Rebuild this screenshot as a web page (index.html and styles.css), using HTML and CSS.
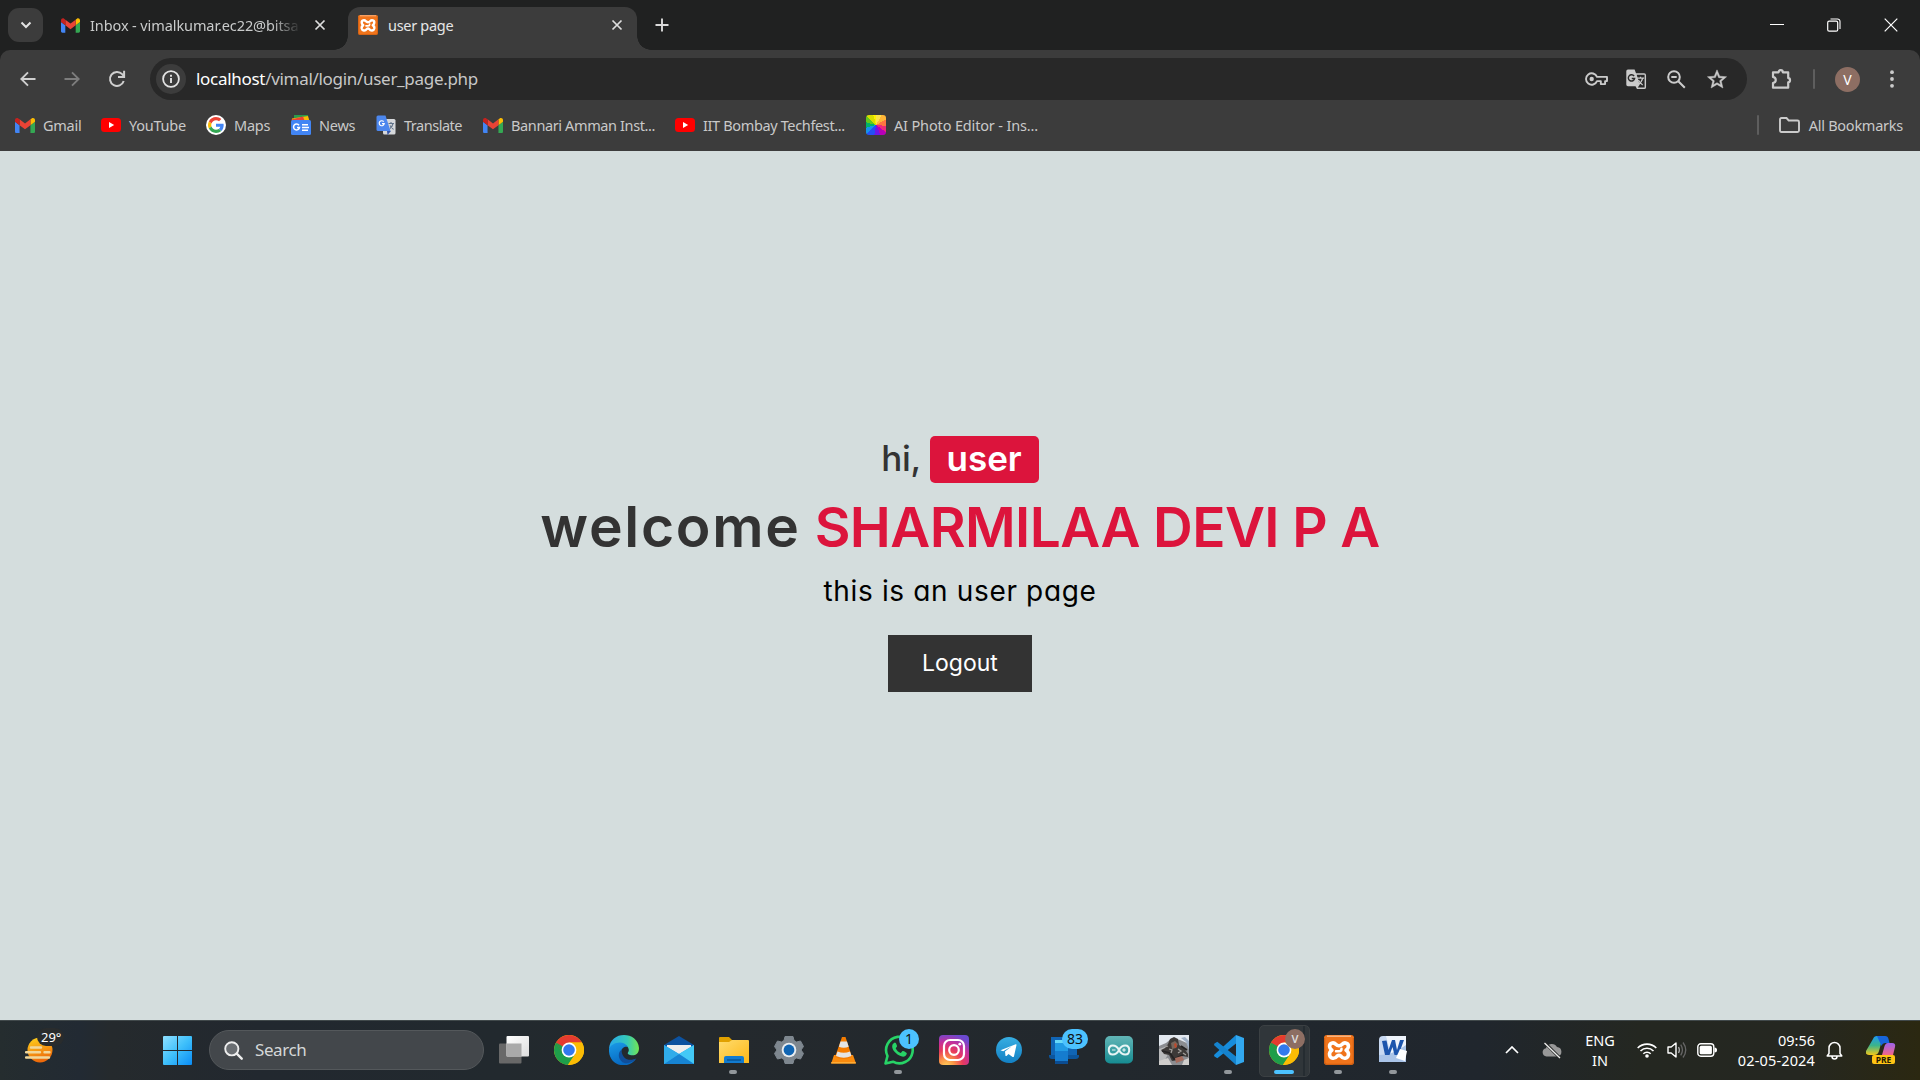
FILE: index.html
```html
<!DOCTYPE html>
<html lang="en">
<head>
<meta charset="utf-8">
<title>user page</title>
<link rel="stylesheet" href="styles.css">
</head>
<body>
<svg class="defs" aria-hidden="true">
  <symbol id="gmail" viewBox="52 42 88 66"><path fill="#4285f4" d="M58 108h14V74L52 59v43c0 3.320 2.690 6 6 6"/><path fill="#34a853" d="M120 108h14c3.320 0 6-2.690 6-6V59l-20 15"/><path fill="#fbbc04" d="M120 48v26l20-15v-8c0-7.420-8.470-11.650-14.400-7.200"/><path fill="#ea4335" d="M72 74V48l24 18 24-18v26L96 92"/><path fill="#c5221f" d="M52 51v8l20 15V48l-5.600-4.200c-5.940-4.450-14.400-.220-14.400 7.200"/></symbol>
  <symbol id="youtube" viewBox="0 0 20 14"><rect width="20" height="14" rx="3.500" fill="#f00"/><path d="M8 4v6l5.200-3z" fill="#fff"/></symbol>
  <symbol id="xampp" viewBox="0 0 30 30"><rect width="30" height="30" rx="3" fill="#f0741b"/><path d="M3 1.200h24" stroke="#f9b98a" stroke-width="1.400"/><path d="M.7 3v24q0 2.300 2.300 2.300h24q2.300 0 2.300-2.300V3" fill="none" stroke="#c85a12" stroke-width="1"/><path d="M11.800 9.300C9.500 6.800 5.200 8 5.600 11.700c.2 1.800 1.400 2.800 2.300 3.500-1.600 1-2.700 2.800-2.300 5 .8 3.700 5.200 4.100 7.400 1 1.200-1 2.800-1 4 0 2.200 3.100 6.600 2.700 7.400-1 .4-2.200-.7-4-2.300-5 .9-.7 2.100-1.700 2.300-3.500.4-3.700-3.900-4.900-6.200-2.400-1.900 2-4.500 2-6.400 0z" fill="none" stroke="#fff" stroke-width="3.600" stroke-linejoin="round"/><path d="M12 16.300h3.200q2.300 0 2.300-2.500" fill="none" stroke="#fff" stroke-width="2.500" stroke-linecap="round"/></symbol>
  <symbol id="chrome" viewBox="0 0 30 30"><circle cx="15" cy="15" r="15" fill="#fbbc05"/><path d="M15 15 2.010 7.500A15 15 0 0 0 13.700 29.950L21.500 18.500z" fill="#1e9e4a"/><path d="M2.010 7.500A15 15 0 0 1 27.990 7.500H15L8.500 18.500z" fill="#e53b2f"/><path d="M1.980 7.550 8.500 18.700 13 21.500 15 15z" fill="#1e9e4a"/><path d="M15 7.500h12.990A15 15 0 0 1 14.200 29.980L21.500 18.700z" fill="#fbbc05"/><circle cx="15" cy="15" r="7.400" fill="#fff"/><circle cx="15" cy="15" r="5.800" fill="#3279ee"/></symbol>
  <symbol id="close" viewBox="0 0 12 12"><path d="M1.500 1.500l9 9m0-9l-9 9" fill="none" stroke="#dedede" stroke-width="1.700"/></symbol>
</svg>

<header class="browser">
  <div class="tabs">
    <button class="tab-search"><svg width="12" height="8" viewBox="0 0 12 8"><path d="M1.500 1.500 6 6l4.500-4.500" fill="none" stroke="#e3e3e3" stroke-width="2"/></svg></button>
    <div class="tab tab-inbox">
      <svg width="19" height="15"><use href="#gmail"/></svg>
      <span class="tab-title fade">Inbox - vimalkumar.ec22@bitsa</span>
      <svg class="x" width="12" height="12"><use href="#close"/></svg>
    </div>
    <div class="tab tab-active">
      <svg width="20" height="20"><use href="#xampp"/></svg>
      <span class="tab-title">user page</span>
      <svg class="x" width="12" height="12"><use href="#close"/></svg>
    </div>
    <svg class="new-tab" width="14" height="14" viewBox="0 0 14 14"><path d="M7 .5v13M.5 7h13" stroke="#dadada" stroke-width="1.900"/></svg>
    <div class="window-controls">
      <svg width="14" height="14" viewBox="0 0 14 14"><path d="M0 6.500h14" stroke="#fff"/></svg>
      <svg width="14" height="14" viewBox="0 0 14 14"><rect x=".7" y="3.200" width="10" height="10" rx="1.500" fill="none" stroke="#fff" stroke-width="1.200"/><path d="M3.500 1h7a2.500 2.500 0 0 1 2.500 2.500V11" fill="none" stroke="#fff" stroke-width="1.100"/></svg>
      <svg width="14" height="14" viewBox="0 0 14 14"><path d="M.7.7l12.600 12.600M13.300.7.700 13.300" stroke="#fff" stroke-width="1.200"/></svg>
    </div>
  </div>

  <div class="toolbar">
    <div class="nav">
      <svg width="16" height="16" viewBox="0 0 16 16"><path d="M15.500 8H2M8 1.300 1.300 8 8 14.700" fill="none" stroke="#cfcfcf" stroke-width="1.900"/></svg>
      <svg width="16" height="16" viewBox="0 0 16 16"><path d="M.5 8H14M8 1.300 14.700 8 8 14.700" fill="none" stroke="#7d7d7d" stroke-width="1.900"/></svg>
      <svg width="18" height="18" viewBox="0 0 18 18"><path d="M15.700 11A7 7 0 1 1 14.200 4.200L16 6" fill="none" stroke="#cfcfcf" stroke-width="2"/><path d="M16.100.8v6.100H10" fill="none" stroke="#cfcfcf" stroke-width="2"/></svg>
    </div>
    <div class="address">
      <span class="info"><svg width="18" height="18" viewBox="0 0 18 18"><circle cx="9" cy="9" r="7.900" fill="none" stroke="#e3e3e3" stroke-width="1.800"/><path d="M9 8v5M9 4.800v1.900" stroke="#e3e3e3" stroke-width="1.900"/></svg></span>
      <span class="url"><b>localhost</b>/vimal/login/user_page.php</span>
      <div class="address-icons">
        <svg width="23" height="14" viewBox="0 0 23 14"><path d="M12 4.900h10v4.200h-1.900v3h-4.300v-3H12A5.700 5.700 0 1 1 12 4.900z" fill="none" stroke="#cbcbcb" stroke-width="1.900" stroke-linejoin="round"/><circle cx="6.700" cy="7" r="2.200" fill="#cbcbcb"/></svg>
        <svg class="lang-icon" width="21" height="21" viewBox="0 0 22 22"><path d="M2 .5h7l1.500 4H19q2 0 2 2V19q0 2-2 2h-7.500L10 18H2q-1.700 0-1.700-1.800V2.300Q.3.500 2 .5z" fill="#cbcbcb"/><path d="M11.200 6h8.300v13.500h-7.200l2-3z" fill="#292929"/><path d="M8.500 7.500A3.300 3.300 0 1 0 9 10H6" fill="none" stroke="#292929" stroke-width="1.500"/><path d="M11.500 9.500h7.500M15.200 8v1.500M17.500 9.500c-.8 3.500-2.500 5.500-5 7M13 11.500c1 2.500 2.500 4 4.500 5.200" fill="none" stroke="#cbcbcb" stroke-width="1.300"/></svg>
        <svg class="zoom-icon" width="19" height="19" viewBox="0 0 19 19"><circle cx="7" cy="7" r="5.800" fill="none" stroke="#cbcbcb" stroke-width="2"/><path d="M11.300 11.300 17.800 17.800M4.300 7h5.400" stroke="#cbcbcb" stroke-width="2"/></svg>
        <svg class="star-icon" width="20" height="20" viewBox="0 0 24 24"><path fill="#cbcbcb" d="m22 9.240-7.190-.62L12 2 9.190 8.630 2 9.240l5.460 4.730L5.820 21 12 17.270 18.180 21l-1.630-7.030zM12 15.400l-3.760 2.270 1-4.280-3.320-2.880 4.380-.38L12 6.100l1.710 4.040 4.380.38-3.320 2.880 1 4.280z" stroke="#cbcbcb" stroke-width=".5" transform="translate(-1.800 -1.300) scale(1.150)"/></svg>
      </div>
    </div>
    <div class="actions">
      <svg width="22" height="22" viewBox="0 0 22 22"><path d="M2 4.300h5.600a2.100 2.100 0 0 1 4.200 0h5.400v5.600a2.300 2.300 0 0 1 0 4.500v5.300H2v-4.600c3.700-.8 3.700-5.400 0-6.200z" fill="none" stroke="#cbcbcb" stroke-width="2.200" stroke-linejoin="round"/></svg>
      <i class="bar"></i>
      <span class="avatar">V</span>
      <svg width="4" height="18" viewBox="0 0 4 18" fill="#cbcbcb"><circle cx="2" cy="2.200" r="1.900"/><circle cx="2" cy="9" r="1.900"/><circle cx="2" cy="15.800" r="1.900"/></svg>
    </div>
  </div>

  <nav class="bookmarks">
    <a class="b1"><svg width="20" height="15"><use href="#gmail"/></svg><span>Gmail</span></a>
    <a class="b2"><svg width="20" height="14"><use href="#youtube"/></svg><span>YouTube</span></a>
    <a class="b3"><svg width="20" height="20" viewBox="-6 -6 60 60"><circle cx="24" cy="24" r="30" fill="#fff"/><path fill="#EA4335" d="M24 9.500c3.540 0 6.710 1.220 9.210 3.600l6.850-6.850C35.900 2.380 30.470 0 24 0 14.620 0 6.510 5.380 2.560 13.220l7.980 6.190C12.430 13.720 17.740 9.500 24 9.500z"/><path fill="#4285F4" d="M46.980 24.550c0-1.570-.15-3.090-.38-4.550H24v9.020h12.940c-.58 2.960-2.260 5.480-4.780 7.180l7.730 6c4.510-4.180 7.090-10.360 7.090-17.650z"/><path fill="#FBBC05" d="M10.530 28.590c-.48-1.450-.76-2.990-.76-4.590s.27-3.140.76-4.590l-7.980-6.190C.92 16.460 0 20.120 0 24c0 3.880.92 7.540 2.560 10.780l7.970-6.190z"/><path fill="#34A853" d="M24 48c6.480 0 11.930-2.130 15.890-5.810l-7.730-6c-2.150 1.450-4.920 2.300-8.160 2.300-6.260 0-11.570-4.220-13.470-9.910l-7.980 6.190C6.510 42.620 14.620 48 24 48z"/></svg><span>Maps</span></a>
    <a class="b4"><svg width="20" height="20" viewBox="0 0 20 20"><path d="M3 0h14v6H3z" fill="#2b9b4b"/><path d="M1 3.500 17 1l1.500 5H1z" fill="#fbbc04"/><path d="M.5 4.500 12 1.500l1.500 4H.5z" fill="#ea4335"/><rect y="5" width="20" height="15" rx="1.500" fill="#4285f4"/><path d="M8 10.200A3 3 0 1 0 8.500 12.500H6" fill="none" stroke="#fff" stroke-width="1.500"/><path d="M11 9.700h6M11 12.500h7M11 15.200h6" stroke="#fff" stroke-width="1.500"/></svg><span>News</span></a>
    <a class="b5"><svg width="20" height="20" viewBox="0 0 20 20"><rect x="7" y="4" width="12.500" height="15.500" rx="1.500" fill="#d6d8db"/><path d="M11 16h4l-3.500 4z" fill="#3554a5"/><path d="M2 .5h7.500L14.500 16H2Q.5 16 .5 14.500V2Q.5.5 2 .5z" fill="#4c87ee"/><path d="M7.700 6.700A2.500 2.500 0 1 0 8.200 8.700H6" fill="none" stroke="#fff" stroke-width="1.200"/><path d="M12.500 8.500h5.500M15 7v1.500M17 8.500q-1 4-3 5M14 10.500l3.500 4" fill="none" stroke="#61738a" stroke-width="1.100"/></svg><span>Translate</span></a>
    <a class="b6"><svg width="20" height="15"><use href="#gmail"/></svg><span>Bannari Amman Inst...</span></a>
    <a class="b7"><svg width="20" height="14"><use href="#youtube"/></svg><span>IIT Bombay Techfest...</span></a>
    <a class="b8"><i class="wheel"></i><span>AI Photo Editor - Ins...</span></a>
    <div class="all"><i class="bar"></i><svg width="21" height="16" viewBox="0 0 21 16"><path d="M1 13.200V2.500Q1 1 2.500 1h5l2.200 2.500h8.800Q20 3.500 20 5v8.500Q20 15 18.500 15h-16Q1 15 1 13.200z" fill="none" stroke="#cbcbcb" stroke-width="1.900"/></svg><span>All Bookmarks</span></div>
  </nav>
</header>

<main class="page">
  <h3><span class="hi">hi,</span> <span class="badge">user</span></h3>
  <h1><span class="welcome">welcome</span> <span class="name">SHARMILAA DEVI P A</span></h1>
  <p>this is an user page</p>
  <a class="logout">Logout</a>
</main>

<footer class="taskbar">
  <div class="weather">
    <svg width="30" height="26" viewBox="0 0 30 26"><defs><linearGradient id="sun" x2=".3" y2="1"><stop stop-color="#ffd51c"/><stop offset="1" stop-color="#ee6a0a"/></linearGradient></defs><circle cx="15" cy="13" r="12.500" fill="url(#sun)"/><path d="M6 10.500h10M1 15.300h14M19.500 15.300h5M1 20.500h23" stroke="#f1d79a" stroke-width="2.400" stroke-linecap="round"/></svg>
    <span class="temp">29°</span>
  </div>
  <svg class="start" width="29" height="29" viewBox="0 0 29 29"><defs><linearGradient id="win" x2="1" y2="1"><stop stop-color="#8fe0ff"/><stop offset=".5" stop-color="#3fc0fb"/><stop offset="1" stop-color="#0a8cf5"/></linearGradient></defs><path d="M1 0h13v14H0V1q0-1 1-1zM15 0h13q1 0 1 1v13H15zM0 15h14v14H1q-1 0-1-1zM15 15h14v13q0 1-1 1H15z" fill="url(#win)"/></svg>
  <div class="search"><svg width="19" height="19" viewBox="0 0 19 19"><circle cx="7.800" cy="7.800" r="6.600" fill="#6a6e72" stroke="#eee" stroke-width="1.900"/><path d="m12.700 12.700 5 5" stroke="#eee" stroke-width="2.400" stroke-linecap="round"/></svg><span>Search</span></div>
  <div class="apps">
    <div class="app"><svg width="30" height="30" viewBox="0 0 30 30"><defs><linearGradient id="tv" x2="1" y2="1"><stop stop-color="#fff"/><stop offset="1" stop-color="#ddd"/></linearGradient></defs><rect y="8.500" width="22.500" height="20" rx="1" fill="#686868"/><rect x="7.500" y="1" width="22.500" height="20.500" rx="1" fill="url(#tv)"/><path d="M7.500 8.500h15v13h-15z" fill="#a9a9a9"/></svg></div>
    <div class="app"><svg width="30" height="30"><use href="#chrome"/></svg></div>
    <div class="app"><svg width="30" height="30" viewBox="0 0 30 30"><defs><linearGradient id="ed1" x2="1"><stop stop-color="#28a8ed"/><stop offset=".6" stop-color="#35c8b8"/><stop offset="1" stop-color="#72e553"/></linearGradient><linearGradient id="ed2" x2=".4" y2="1"><stop stop-color="#1a9be8"/><stop offset="1" stop-color="#0768c0"/></linearGradient></defs><path d="M0 14C1-5 29-4 30 13c0 7-5 8-9 7-3-.7-2.400-2-1.600-3.300C22 12 12 3 0 14z" fill="url(#ed1)"/><path d="M0 14C2 8 14 4 19 12c-5-1.500-8 3-6.500 8 2 6.500 9 8 14.500 4C18 36-1 30 0 14z" fill="url(#ed2)"/><path d="M12.500 14.500c-5 4-2.500 12 3 13.500C20 29 25 26.500 27.500 23.300c-7 3.500-15 1-15-8.800z" fill="#104e9a"/></svg></div>
    <div class="app"><svg width="30" height="30" viewBox="0 0 30 30"><path d="M0 10 15 1l15 9v9H0z" fill="#0c52a0"/><path d="M3 10h24v12H3z" fill="#eee"/><path d="M0 10l15 9 15-9v19H0z" fill="#2aa4e9"/><path d="M30 10v19L15 19z" fill="#43c9f6"/><path d="M0 29 15 19l15 10z" fill="#1784d3"/><path d="M0 10v19l15-10z" fill="#30acea"/></svg></div>
    <div class="app running"><svg width="30" height="30" viewBox="0 0 30 30"><defs><linearGradient id="fo" x2="1" y2="1"><stop stop-color="#ffdc6e"/><stop offset="1" stop-color="#fdb717"/></linearGradient></defs><path d="M0 3q0-1 1-1h9l3 3v5H0z" fill="#e1a100"/><path d="M0 7h10l3-2h16q1 0 1 1v22H0z" fill="url(#fo)"/><path d="M5 28v-5q0-2 2-2h16q2 0 2 2v5z" fill="#127bd0"/><path d="M8 25h14" stroke="#075293" stroke-width="1.400"/></svg></div>
    <div class="app"><svg width="30" height="30" viewBox="0 0 30 30"><path d="M11 1.500h8l1 4 2.500 1.500 4-1 3 5.500-2.500 3.500 2.500 3.500-3 5.500-4-1-2.500 1.500-1 4h-8l-1-4L7.500 23l-4 1-3-5.500L3 15 .5 11.500l3-5.500 4 1L10 5.500z" fill="#7e878f" stroke="#7e878f" stroke-linejoin="round"/><circle cx="15" cy="15" r="7.300" fill="#e9edf0"/><circle cx="15" cy="15" r="5.400" fill="#1065b3"/></svg></div>
    <div class="app"><svg width="30" height="30" viewBox="0 0 30 30"><path d="M5 20h19l3 8.500H2.200z" fill="#fb8b0d"/><path d="M13 2h3.500l6.500 20q-8.500 4-17 0z" fill="#f57c00"/><path d="m11.500 6.500 6.500 0 1.700 5.300q-5 1.700-9.800 0zM8.500 16.500q6.300 2.500 12.500 0l1.500 4.500q-7.700 3.500-15.500 0z" fill="#e4e4e4"/><path d="M2.200 27h24.500v1.500H2.200z" fill="#ffac35"/></svg></div>
    <div class="app running"><svg width="30" height="30" viewBox="0 0 30 30"><path d="m1.500 28.500 2-7.500A13.300 13.300 0 1 1 9 26.700z" fill="none" stroke="#27d366" stroke-width="2.600" stroke-linejoin="round"/><path d="M10.800 7.600c-4.500 2-2.500 7.500 1 10.500 3.800 3.600 9.500 5.500 11 .7.300-1.200-3.800-3.200-4.500-2.600l-1.500 1.900c-2.300-.8-4.200-2.700-5.100-4.900l1.300-1.700c.3-.7-1.200-4.200-2.200-3.900z" fill="#27d366"/></svg><b class="count">1</b></div>
    <div class="app"><svg width="30" height="30" viewBox="0 0 30 30"><defs><radialGradient id="ig" cx=".25" cy="1.050" r="1.100"><stop stop-color="#ffd35c"/><stop offset=".25" stop-color="#fb9346"/><stop offset=".5" stop-color="#e83b5c"/><stop offset=".75" stop-color="#c4309b"/><stop offset="1" stop-color="#6c4ad0"/></radialGradient></defs><rect width="30" height="30" rx="4" fill="url(#ig)"/><g fill="none" stroke="#fff" stroke-width="2.200"><rect x="5" y="5" width="20" height="20" rx="6"/><circle cx="15" cy="15" r="4.800"/></g><circle cx="20.800" cy="9.200" r="1.400" fill="#fff"/></svg></div>
    <div class="app"><svg width="30" height="30" viewBox="0 0 30 30"><defs><linearGradient id="tg" x2="0" y2="1"><stop stop-color="#37aee2"/><stop offset="1" stop-color="#1380c4"/></linearGradient></defs><circle cx="15" cy="15" r="13" fill="url(#tg)"/><path d="M6.500 15.200 21.700 9.300c.7-.2.900.2.800.7L20 21.300c-.2.900-.8 1-1.400.6l-4.100-3-2 2-1 .2-.5-4.500 6.800-5.400-8.600 5z" fill="#fff"/></svg></div>
    <div class="app"><svg width="30" height="30" viewBox="0 0 30 30"><path d="M2 2h26v19H2z" fill="#1065b5"/><path d="M0 20h30v2q-1 2-3 2H3q-3 0-3-3z" fill="#0c559c"/><path d="M6 5h13v24H6z" fill="#219be4"/><path d="M6 5h13v3H6z" fill="#67d9f8"/><path d="M6 16h13v10H6z" fill="#157ccf"/><path d="M6 26h13v3H6z" fill="#0b4c91"/></svg><b class="count wide">83</b></div>
    <div class="app"><svg width="30" height="30" viewBox="0 0 30 30"><defs><linearGradient id="ar" x2="0" y2="1"><stop stop-color="#62b5b6"/><stop offset="1" stop-color="#168c92"/></linearGradient></defs><rect y="1" x="1" width="28" height="27.500" rx="5" fill="url(#ar)"/><path d="M15 15C12 9 4.800 9 4.800 15S12 21 15 15s10.200-6 10.200 0S18 21 15 15z" fill="none" stroke="#e8f5f5" stroke-width="2"/><path d="M8 15h3.500M18.200 15h3.600M20 13.200v3.600" stroke="#e8f5f5" stroke-width="1.200"/></svg></div>
    <div class="app"><svg width="30" height="30" viewBox="0 0 30 30"><path d="M0 0h30v30H0z" fill="#8b8d91"/><path d="M0 0h30v9l-9-4-8-2L7 8 0 11z" fill="#e2e8ef"/><path d="M22 3l5 4 3 8V6l-4-4z" fill="#9eafc4"/><path d="m0 14 6-2 4 5-4 8-6 5z" fill="#b9babb"/><path d="m9 9 2-5 4-2 4 2 1 6 5 3 4 6v3l-6-1-3 4-7 1-3-6-5-1-3-4 4-2z" fill="#3d3a38"/><path d="m12 8 4-2 3 3-2 4-4 1z" fill="#77675c"/><path d="m3 16 8 2 4 6 9-4M22 11l6 4" fill="none" stroke="#252424" stroke-width="1.800"/><path d="m10 14 3 1-1 3M19 14l3 2-3 2M6 12l3-1M24 18l3 2" fill="none" stroke="#a3a09c" stroke-width="1.300"/><path d="m16 23 7-2 2 4-8 3z" fill="#a56c5d"/><path d="m15 9 2-1 1 4-2 1z" fill="#c0492c"/><path d="m0 26 9-3 4 7H0zM25 25l5-2v7h-7z" fill="#cfcdcb"/></svg></div>
    <div class="app running"><svg width="30" height="30" viewBox="0 0 30 30"><path d="M22 0v8.500L3.300 23.300.5 21.500q-.8-1 0-2z" fill="#178ddc"/><path d="M22 30v-8.500L3.300 6.700.5 8.500q-.8 1 0 2z" fill="#1583ce"/><path d="m22 0 8 3v24l-8 3z" fill="#32a8ef"/></svg></div>
    <div class="app active"><svg width="30" height="30"><use href="#chrome"/></svg><b class="profile">V</b></div>
    <div class="app running"><svg width="30" height="30"><use href="#xampp"/></svg></div>
    <div class="app running"><svg width="30" height="30" viewBox="0 0 30 30"><path d="M4 1h23v26H0V5q0-4 4-4z" fill="#c8d9f2"/><path d="M7 1h20v26H14z" fill="#eef4fc"/><path d="M0 20q14 0 27-10v17H0z" fill="#aac4e8"/><path d="m3 6 4.500-.5L9.500 15 13 5h3l2 10 3-10h4l-5.500 15h-4l-2-8-3 8H6z" fill="#1c55ad"/><path d="m21 14 7 2-2 10-9-3z" fill="#fff"/></svg></div>
  </div>
  <div class="tray">
    <svg class="up" width="14" height="8" viewBox="0 0 14 8"><path d="M1 7l6-6 6 6" fill="none" stroke="#fff" stroke-width="1.700"/></svg>
    <svg class="cloud" width="20" height="17" viewBox="0 0 20 17"><path d="M4.500 14.500A4.200 4.200 0 0 1 4 6.200 6 6 0 0 1 15 5a4.800 4.800 0 0 1 .5 9.500z" fill="#989898"/><path d="M3 1l15 15" stroke="#272a28" stroke-width="3"/><path d="M2.500 1l15.500 15" stroke="#eee" stroke-width="1.300"/></svg>
    <div class="lang"><span>ENG</span><span>IN</span></div>
    <svg class="wifi" width="20" height="16" viewBox="0 0 20 16"><g fill="none" stroke="#fff" stroke-width="1.600"><path d="M.7 6a13.200 13.200 0 0 1 18.600 0M3.500 9a9.200 9.200 0 0 1 13 0M6.300 11.800a5.300 5.300 0 0 1 7.400 0"/></g><circle cx="10" cy="14" r="1.800" fill="#fff"/></svg>
    <svg class="vol" width="20" height="18" viewBox="0 0 20 18"><path d="M1 6h3.200L9 2v14l-4.800-4H1z" fill="none" stroke="#fff" stroke-width="1.400" stroke-linejoin="round"/><path d="M11.500 6q1.800 3 0 6" fill="none" stroke="#aaa" stroke-width="1.300"/><path d="M13.700 3.700q3.500 5.300 0 10.600M16 1.500q5.500 7.500 0 15" fill="none" stroke="#666" stroke-width="1.300"/></svg>
    <svg class="batt" width="20" height="14" viewBox="0 0 20 14"><rect x=".8" y=".8" width="16" height="12.400" rx="3" fill="none" stroke="#fff" stroke-width="1.400"/><rect x="2.700" y="2.700" width="12.200" height="8.600" rx="1.500" fill="#fff"/><path d="M17.500 4.500q2.500 0 2.500 2.500t-2.500 2.500z" fill="#fff"/></svg>
    <div class="clock"><span>09:56</span><span class="date">02-05-2024</span></div>
    <svg class="bell" width="17" height="19" viewBox="0 0 17 19"><path d="M3 12.500V7a5.500 5.500 0 0 1 11 0v5.500l1.800 2.500H1.200zM6 15.500a2.500 2.500 0 0 0 5 0" fill="none" stroke="#fff" stroke-width="1.500" stroke-linejoin="round"/></svg>
    <div class="copilot"><svg width="30" height="28" viewBox="0 0 30 28"><defs><linearGradient id="cp1" x2="0" y2="1"><stop stop-color="#1e9bf0"/><stop offset=".5" stop-color="#3cb48a"/><stop offset="1" stop-color="#f3c81a"/></linearGradient><linearGradient id="cp2" x2="0" y2="1"><stop stop-color="#9d63ec"/><stop offset="1" stop-color="#f36586"/></linearGradient></defs><path d="M7 3q1-3 4-3h9q-3 0-4 4l-3 11q-1 4-5 4H3q-4 0-3-4z" fill="url(#cp1)"/><path d="M11 0h8q3 0 3.500 3l1 4h-4q-3 0-4 3z" fill="#1765db"/><path d="M18 12q1-5 4-5h4q4 0 3 4l-2 8H16z" fill="url(#cp2)"/></svg><b>PRE</b></div>
  </div>
</footer>
</body>
</html>
```
FILE: styles.css
```css
* { box-sizing: border-box; }
body { margin: 0; width: 1920px; height: 1080px; overflow: hidden; display: flex; flex-direction: column; font-family: "Noto Sans", sans-serif; background: #d4dddd; }
svg { display: block; flex: none; }
span { white-space: nowrap; }
.defs { position: absolute; width: 0; height: 0; }

.browser { flex: none; height: 151px; background: #202121; }
.tabs { height: 50px; display: flex; align-items: center; padding-left: 8px; font-size: 14.500px; color: #c9cbcb; }
.tab-search { width: 35px; height: 34px; border: 0; border-radius: 11px; background: #3c3c3c; padding: 0; display: grid; place-items: center; }
.tab { height: 43px; align-self: flex-end; display: flex; align-items: center; padding-bottom: 7px; }
.tab-inbox { width: 305px; padding-left: 18px; }
.tab-title { flex: 1; margin-left: 10px; line-height: 22px; letter-spacing: -.3px; }
.fade { flex: none; width: 209px; letter-spacing: -.1px; -webkit-mask-image: linear-gradient(90deg, #000 87%, transparent 101%); mask-image: linear-gradient(90deg, #000 87%, transparent 101%); }
.tab-inbox .x { margin-left: 15px; }
.tab-active { width: 289px; background: #3c3c3c; border-radius: 12px 12px 0 0; padding: 0 14px 7px 10px; color: #e6e6e6; position: relative; }
.tab-active::before, .tab-active::after { content: ""; position: absolute; bottom: 0; width: 14px; height: 14px; }
.tab-active::before { left: -14px; background: radial-gradient(circle at 0 0, transparent 13.500px, #3c3c3c 14px); }
.tab-active::after { right: -14px; background: radial-gradient(circle at 100% 0, transparent 13.500px, #3c3c3c 14px); }
.new-tab { margin-left: 18px; }
.window-controls { margin-left: auto; padding-right: 22px; display: flex; gap: 43px; }

.toolbar { height: 58px; background: #3c3c3c; border-radius: 10px 10px 0 0; display: flex; align-items: center; }
.nav { width: 150px; padding-left: 20px; display: flex; align-items: center; gap: 28px; }
.address { width: 1597px; height: 42px; border-radius: 21px; background: #282828; display: flex; align-items: center; padding: 0 20px 0 6px; }
.info { width: 30px; height: 30px; border-radius: 50%; background: #3c3c3c; display: grid; place-items: center; }
.url { margin-left: 10px; font-size: 17px; letter-spacing: -.3px; color: #c7c7c7; line-height: 24px; }
.url b { font-weight: 400; color: #fff; }
.address-icons { margin-left: auto; display: flex; align-items: center; }
.lang-icon { margin-left: 18px; }
.zoom-icon { margin-left: 20px; }
.star-icon { margin-left: 21px; }
.actions { flex: 1; display: flex; align-items: center; padding-left: 24px; }
.bar { width: 2px; height: 20px; background: #5e5e5e; border-radius: 1px; }
.actions .bar { margin-left: 20px; }
.avatar { width: 25px; height: 25px; margin: 0 30px 0 20px; border-radius: 50%; background: #8d6e63; color: #fff; font-size: 14px; line-height: 25px; text-align: center; }

.bookmarks { height: 43px; background: #3c3c3c; padding: 0 17px 9px 15px; display: flex; align-items: center; font-size: 14.500px; letter-spacing: -.25px; line-height: 20px; color: #c9c9c9; }
.bookmarks a { display: flex; align-items: center; gap: 8px; }
.b1 { width: 86px; } .b2 { width: 105px; } .b3 { width: 85px; } .b4 { width: 85px; }
.b5 { width: 107px; letter-spacing: -.48px; }
.b6 { width: 192px; letter-spacing: -.38px; }
.b7 { width: 191px; letter-spacing: -.36px; }
.b8 { letter-spacing: -.15px; }
.wheel { width: 20px; height: 20px; border-radius: 3px; background: conic-gradient(#fbe34b 0 30deg, #ffb638 30deg 60deg, #ff7541 60deg 95deg, #ee2a7b 95deg 125deg, #b800b8 125deg 155deg, #6b18e8 155deg 190deg, #2450f5 190deg 225deg, #1693ed 225deg 255deg, #00b469 255deg 285deg, #62c81e 285deg 315deg, #d8df00 315deg 345deg, #fff200 345deg); }
.all { margin-left: auto; display: flex; align-items: center; }
.all svg { margin: 0 9px 0 20px; }

.page { flex: none; height: 869px; background: #d4dddd; display: flex; flex-direction: column; align-items: center; padding-top: 285px; font-family: Inter, "Open Sans", sans-serif; font-feature-settings: "cv11"; color: #333; }
.page h3 { margin: 0; height: 47px; font-size: 35px; line-height: 45px; font-weight: 500; display: flex; gap: 9px; }
.hi { letter-spacing: -.4px; }
.badge { background: #dc143c; color: #fff; border-radius: 5px; width: 109px; height: 47px; text-align: center; font-weight: 600; }
.page h1 { margin: 11px 0 0; height: 66px; line-height: 66px; font-size: 55px; font-weight: 600; display: flex; gap: 14px; }
.welcome { font-size: 57px; letter-spacing: 1.700px; }
.name { color: #dc143c; letter-spacing: -.6px; }
.page p { margin: 13px 0 0; height: 36px; line-height: 36px; font-size: 28px; letter-spacing: .65px; color: #000; }
.logout { margin-top: 26px; width: 144px; height: 57px; line-height: 56px; background: #333; color: #fff; font-size: 23px; text-align: center; }

.taskbar { flex: none; height: 60px; border-top: 1px solid #41494b; padding-bottom: 1px; display: flex; align-items: center; background: linear-gradient(90deg, #252d2f 0, #222a33 80px, #252a2d 110px, #22282f 260px, #22292e 500px, #24292d 700px, #22282d 1100px, #20262d 1480px, #242721 1640px, #252721 1800px, #2b2811 1920px); color: #fff; }
.weather { width: 163px; padding-left: 25px; position: relative; }
.temp { position: absolute; left: 37px; top: -9px; padding: 0 3px 0 4px; border-radius: 9px; background: #292c2d; font-size: 13px; line-height: 18px; }
.search { margin-left: 17px; width: 275px; height: 40px; border: 1px solid #54585b; border-radius: 20px; background: #43474b; display: flex; align-items: center; padding-left: 14px; gap: 12px; font-size: 17px; letter-spacing: -.4px; line-height: 24px; color: #d5d7d8; }
.apps { margin-left: 2px; display: grid; grid-template-columns: repeat(17, 55px); }
.app { height: 58px; display: grid; place-items: center; position: relative; }
.running::after, .active::after { content: ""; position: absolute; left: 23px; top: 49px; width: 8px; height: 4px; border-radius: 2px; background: #92979b; }
.active::before { content: ""; position: absolute; left: 3px; top: 4px; width: 49px; height: 50px; border-radius: 5px; border: 1px solid #3b4043; background: linear-gradient(90deg, #30363a 43px, #252c31 43px, #252c31 45px, #30363a 45px); }
.active svg { position: relative; }
.active::after { left: 18px; width: 20px; background: #4cc2ff; }
.count { position: absolute; left: 28px; top: 8px; min-width: 20px; height: 20px; border-radius: 10px; background: #4cc2ff; color: #111; font-weight: 400; font-size: 14px; line-height: 20px; text-align: center; }
.wide { left: 26px; width: 26px; }
.profile { position: absolute; left: 29px; top: 8px; width: 20px; height: 20px; border-radius: 50%; background: #8d6e63; color: #ddd; font-size: 11px; font-weight: 600; line-height: 20px; text-align: center; }
.tray { flex: 1; display: flex; align-items: center; font-size: 14.500px; line-height: 20px; padding-left: 84px; }
.cloud { margin-left: 23px; }
.lang { width: 40px; margin-left: 18px; display: flex; flex-direction: column; align-items: center; }
.wifi { margin-left: 17px; }
.vol { margin-left: 10px; }
.batt { margin-left: 10px; }
.clock { width: 98px; display: flex; flex-direction: column; align-items: flex-end; }
.date { letter-spacing: .15px; }
.bell { margin-left: 11px; }
.copilot { position: relative; margin-left: 23px; }
.copilot b { position: absolute; left: 6px; top: 19px; width: 23px; height: 9px; border-radius: 2px; background: #ffc414; color: #241b00; font-size: 8.500px; line-height: 9px; text-align: center; }
```
